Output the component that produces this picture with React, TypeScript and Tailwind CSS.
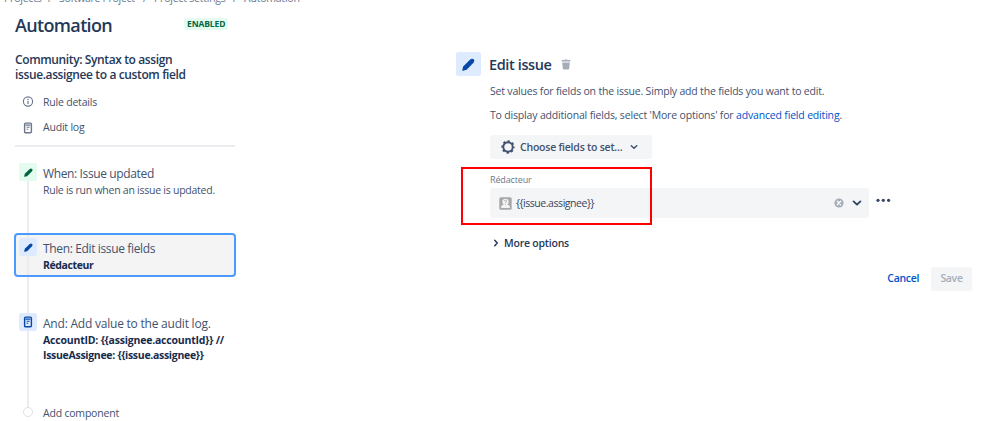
import React from "react";

function Pencil({ size, className }: { size: number; className: string }) {
  return (
    <svg width={size} height={size} viewBox="0 0 12 12" className={className} fill="currentColor">
      <path d="M1.1 7.8 7.3 1.6 Q9.2 -.1 10.8 1.2 Q12.1 2.8 10.4 4.7 L4.2 10.9 1 11.7 Q.2 11.8.3 11.1Z" />
    </svg>
  );
}

function LogIcon({ size, className }: { size: number; className: string }) {
  return (
    <svg width={size} height={size} viewBox="0 0 12 12" className={className} fill="none" stroke="currentColor">
      <rect x="2.6" y="1.1" width="6.8" height="9.6" rx="1" strokeWidth="1.4" />
      <path d="M3.4 3.1h5M4.6 5.3h3M4.6 7.2h1.6" strokeWidth="1.1" />
    </svg>
  );
}

function Chevron({ size, turn = "" }: { size: number; turn?: string }) {
  return (
    <svg width={size} height={size} viewBox="0 0 10 10" className={turn} fill="none" stroke="currentColor" strokeWidth="1.9" strokeLinecap="round" strokeLinejoin="round">
      <path d="M1.6 3.4 5 6.6 8.4 3.4" />
    </svg>
  );
}

function Gear() {
  return (
    <svg width="14" height="14" viewBox="0 0 14 14" fill="none" stroke="currentColor">
      <circle cx="7" cy="7" r="4.7" strokeWidth="1.9" />
      <circle cx="7" cy="7" r="5.8" strokeWidth="1.7" strokeDasharray="2.3 2.255" strokeDashoffset="1.15" />
    </svg>
  );
}

function Rail() {
  return <div className="w-[2px] flex-1 bg-[#ebecf0]" />;
}

function Sidebar() {
  return (
    <aside className="w-[236px] shrink-0 pl-[15px]">
      <div className="-mt-[9px] -ml-[11px] flex h-[13px] w-[320px] whitespace-nowrap text-[10.5px] leading-[14px] tracking-[-0.22px] text-[#6b778c]">
        <span className="w-[44px]">Projects</span><span className="w-[11px]">/</span>
        <span className="w-[84px] tracking-[-0.3px]">Software Project</span><span className="w-[11px]">/</span>
        <span className="w-[79px]">Project settings</span><span className="w-[11px]">/</span>
        <span>Automation</span>
      </div>
      <div className="mt-[9px] flex h-6 items-start">
        <h1 className="w-[169px] text-[18px] font-semibold leading-6 tracking-[-0.65px] text-[#253858]">Automation</h1>
        <span className="mt-[5px] h-3 rounded-[3px] bg-[#e3fcef] px-[3px] text-[8.5px] font-bold leading-3 tracking-[-0.1px] text-[#006644]">ENABLED</span>
      </div>
      <h2 className="mt-[15px] whitespace-nowrap text-[12px] font-semibold leading-[15px] tracking-[-0.38px] text-[#253858]">
        Community: Syntax to assign<br />issue.assignee to a custom field
      </h2>
      <nav className="mt-[12px] text-[10.5px] tracking-[-0.2px] text-[#42526e]">
        <div className="flex h-4 items-center">
          <svg className="ml-[7px] mr-[9px]" width="12" height="12" viewBox="0 0 12 12" fill="none" stroke="#6b778c">
            <circle cx="6" cy="5.5" r="4.6" strokeWidth="1.1" />
            <path d="M6 4.8v3.1M6 2.7v1.2" strokeWidth="1.2" />
          </svg>
          <span className="pt-px">Rule details</span>
        </div>
        <div className="mt-[10px] flex h-4 items-center">
          <LogIcon size={12} className="-mt-px ml-[7px] mr-[9px] text-[#6b778c]" />
          <span>Audit log</span>
        </div>
      </nav>
      <div className="mt-[9px] h-[2px] w-[220px] bg-[#ebecf0]" />

      <div className="mt-[16px] flex h-[70px] pl-1">
        <div className="flex w-[18px] flex-col items-center">
          <div className="flex h-[18px] w-[18px] items-center justify-center rounded-[2px] bg-[#e3fcef]"><Pencil size={9} className="text-[#006644]" /></div>
          <Rail />
        </div>
        <div className="ml-[6px] whitespace-nowrap text-[#42526e]">
          <div className="mt-[2px] text-[12px] leading-[18px] tracking-[-0.37px]">When: Issue updated</div>
          <div className="text-[10.5px] leading-[15px] tracking-[-0.25px]">Rule is run when an issue is updated.</div>
        </div>
      </div>
      <div className="-ml-px flex h-11 w-[222px] rounded-[4px] border-2 border-[#4c9aff] bg-[#f4f4f5] pl-[3px]">
        <div className="flex w-[18px] flex-col items-center">
          <div className="h-[3px] w-[2px] bg-[#ebecf0]" />
          <div className="flex h-[18px] w-[18px] items-center justify-center rounded-[2px] bg-[#deebff]"><Pencil size={9} className="text-[#0747a6]" /></div>
          <Rail />
        </div>
        <div className="ml-[6px] whitespace-nowrap pt-[5px] text-[#42526e]">
          <div className="text-[12px] leading-[18px] tracking-[-0.36px]">Then: Edit issue fields</div>
          <div className="text-[10.5px] font-bold leading-[15px] tracking-[-0.4px] text-[#172b4d]">Rédacteur</div>
        </div>
      </div>
      <div className="ml-1 flex h-9 w-[18px] flex-col items-center"><Rail /></div>
      <div className="flex h-[94px] pl-1">
        <div className="flex w-[18px] flex-col items-center">
          <div className="flex h-[18px] w-[18px] items-center justify-center rounded-[2px] bg-[#deebff]"><LogIcon size={12} className="text-[#0747a6]" /></div>
          <Rail />
        </div>
        <div className="ml-[6px] whitespace-nowrap">
          <div className="mt-[2px] text-[12px] leading-[18px] tracking-[-0.22px] text-[#42526e]">And: Add value to the audit log.</div>
          <div className="text-[10.5px] font-bold leading-[15px] tracking-[-0.2px] text-[#172b4d]">AccountID: {"{{assignee.accountId}}"} //<br /><span className="tracking-[-0.3px]">IssueAssignee: {"{{issue.assignee}}"}</span></div>
        </div>
      </div>
      <div className="flex h-[14px] items-start pl-1">
        <div className="flex w-[18px] justify-center"><div className="h-[10px] w-[10px] rounded-full border-[1.5px] border-[#dfe1e6]" /></div>
        <div className="-mt-[1px] ml-[6px] text-[10.5px] leading-[14px] tracking-[-0.2px] text-[#42526e]">Add component</div>
      </div>
    </aside>
  );
}

function Field() {
  return (
    <div className="relative pt-[14px]">
      <div className="h-[15px] text-[9px] leading-[14px] tracking-[-0.15px] text-[#6b778c]">Rédacteur</div>
      <div className="flex items-start">
        <div className="flex h-[30px] w-[379px] items-center rounded-[3px] bg-[#f4f5f7] pl-[9px] pr-[7px] text-[#344563]">
          <svg width="13" height="13" viewBox="0 0 13 13">
            <rect x=".3" y=".3" width="12.4" height="12.4" rx="1.5" fill="#a8a8a8" />
            <path d="M2.2 11V9.2Q2.4 8.3 4.6 7.8 3.3 6.3 3.3 4.5 3.5 1.8 6.5 1.8T9.7 4.5Q9.7 6.3 8.4 7.8 10.6 8.3 10.8 9.2V11Z" fill="#f3f3f3" />
            <path d="M5.3 4.1Q5.4 3.2 6.5 3.2 7.7 3.3 7.6 4.3 7.5 5 6.5 5.4V6M6.5 6.8v.8" fill="none" stroke="#a0a0a0" strokeWidth=".8" />
          </svg>
          <span className="ml-[4px] text-[10.5px] leading-[16px] tracking-[-0.44px]">{"{{issue.assignee}}"}</span>
          <svg className="ml-auto" width="10" height="10" viewBox="0 0 10 10">
            <circle cx="5" cy="5" r="4.6" fill="#a5adba" />
            <path d="M3.3 3.3 6.7 6.7M6.7 3.3 3.3 6.7" stroke="white" strokeWidth="1.3" strokeLinecap="round" />
          </svg>
          <span className="ml-2"><Chevron size={10} /></span>
        </div>
        <svg className="ml-[7px] mt-[10px] text-[#344563]" width="15" height="5" viewBox="0 0 15 5" fill="currentColor">
          <circle cx="2" cy="2.3" r="1.6" /><circle cx="7.3" cy="2.3" r="1.6" /><circle cx="12.6" cy="2.3" r="1.6" />
        </svg>
      </div>
      <div className="absolute -left-[29px] top-[8px] h-[58px] w-[191px] border-2 border-[#ff0000]" />
    </div>
  );
}

export default function App() {
  return (
    <div className="flex h-[421px] w-[999px] overflow-hidden bg-white font-['Open_Sans','Noto_Sans',sans-serif]">
      <Sidebar />
      <main className="ml-[220px] w-[516px] pt-[52px]">
        <div className="flex h-6 items-center">
          <div className="flex h-6 w-[25px] items-center justify-center rounded-[2px] bg-[#deebff]"><Pencil size={13} className="text-[#0747a6]" /></div>
          <h2 className="ml-[8px] w-[64px] whitespace-nowrap pt-[2px] text-[14.5px] font-semibold leading-5 tracking-[-0.38px] text-[#253858]">Edit issue</h2>
          <svg className="ml-[8px]" width="10" height="11" viewBox="0 0 10 11" fill="#a5adba">
            <path d="M.6 1.6Q.6 1 1.2 1H3.4Q3.5.4 4 .4H6Q6.5.4 6.6 1H8.8Q9.4 1 9.4 1.6V2.6H.6ZM1.2 3.4H8.8L8.2 9.6Q8.1 10.5 7.3 10.5H2.7Q1.9 10.5 1.8 9.6Z" />
          </svg>
        </div>
        <div className="pl-[34px] text-[10.5px] text-[#42526e]">
          <p className="mt-[7px] whitespace-nowrap leading-4 tracking-[-0.19px]">Set values for fields on the issue. Simply add the fields you want to edit.</p>
          <p className="mt-2 whitespace-nowrap leading-4 tracking-[-0.175px]">To display additional fields, select 'More options' for <a className="text-[#0052cc]">advanced field editing</a>.</p>
          <button className="mt-[12px] flex h-6 w-[162px] items-center rounded-[3px] bg-[#f4f5f7] pl-[11px] font-semibold tracking-[-0.22px] text-[#42526e]">
            <Gear />
            <span className="ml-[5px] mr-[8px] whitespace-nowrap pt-px">Choose fields to set...</span>
            <Chevron size={8} />
          </button>
          <Field />
          <div className="mt-[17px] flex h-4 items-center pl-[2px] font-semibold tracking-[-0.22px] text-[#253858]">
            <Chevron size={8} turn="-rotate-90" />
            <span className="ml-[4px] leading-4">More options</span>
          </div>
          <div className="mt-[15px] flex h-6 items-center justify-end pt-px font-semibold tracking-[-0.32px]">
            <a className="mr-[12px] text-[#0052cc]">Cancel</a>
            <button className="h-6 w-[41px] rounded-[3px] bg-[#f4f5f7] text-[#a5adba]">Save</button>
          </div>
        </div>
      </main>
    </div>
  );
}
